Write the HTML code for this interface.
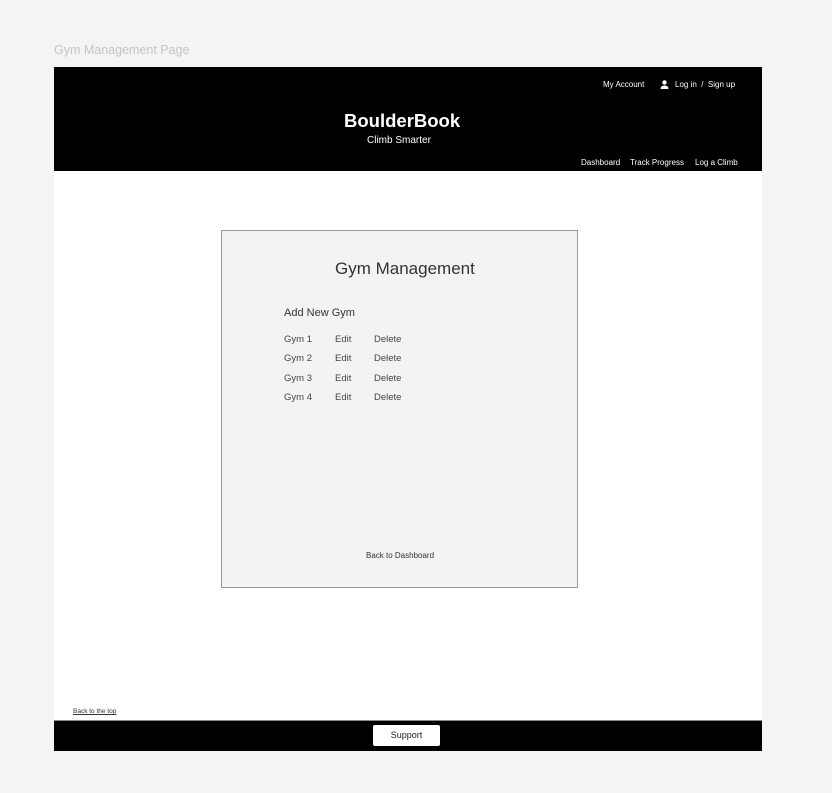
<!DOCTYPE html>
<html><head><style>
*{margin:0;padding:0;box-sizing:border-box}
body{width:832px;height:793px;background:#f4f4f4;font-family:"Liberation Sans",sans-serif;position:relative;overflow:hidden}
.a{position:absolute;white-space:nowrap}
</style></head><body>
<div class="a" style="left:54px;top:43px;font-size:12.5px;color:#c4c4c4">Gym Management Page</div>
<div class="a" style="left:54px;top:67px;width:708px;height:684px;background:#fff"></div>
<div class="a" style="left:54px;top:67px;width:708px;height:104px;background:#000"></div>
<div class="a" style="left:603px;top:80px;font-size:8px;color:#fff">My Account</div>
<svg class="a" style="left:660px;top:80px" width="9" height="9" viewBox="0 0 9 9"><circle cx="4.5" cy="2.5" r="2.2" fill="#fff"/><path d="M0.5 9 Q0.5 5.5 4.5 5.5 Q8.5 5.5 8.5 9Z" fill="#fff"/></svg>
<div class="a" style="left:675px;top:80px;font-size:8px;color:#fff">Log in &nbsp;/&nbsp; Sign up</div>
<div class="a" style="left:344px;top:110px;font-size:18.5px;font-weight:bold;color:#fff">BoulderBook</div>
<div class="a" style="left:367px;top:135px;font-size:10px;color:#fff">Climb Smarter</div>
<div class="a" style="left:581px;top:158px;font-size:8px;color:#fff">Dashboard</div>
<div class="a" style="left:630px;top:158px;font-size:8px;color:#fff">Track Progress</div>
<div class="a" style="left:695px;top:158px;font-size:8px;color:#fff">Log a Climb</div>
<div class="a" style="left:221px;top:230px;width:357px;height:358px;background:#f2f3f5;border:1px solid #999"></div>
<div class="a" style="left:335px;top:259px;font-size:17px;color:#333">Gym Management</div>
<div class="a" style="left:284px;top:307px;font-size:11px;color:#333">Add New Gym</div>
<div class="a" style="left:284px;top:330px;font-size:9.5px;color:#444;line-height:19.3px">Gym 1<br>Gym 2<br>Gym 3<br>Gym 4</div>
<div class="a" style="left:335px;top:330px;font-size:9.5px;color:#444;line-height:19.3px">Edit<br>Edit<br>Edit<br>Edit</div>
<div class="a" style="left:374px;top:330px;font-size:9.5px;color:#444;line-height:19.3px">Delete<br>Delete<br>Delete<br>Delete</div>
<div class="a" style="left:366px;top:551px;font-size:8px;color:#333">Back to Dashboard</div>
<div class="a" style="left:73px;top:708px;font-size:6.5px;color:#333;text-decoration:underline">Back to the top</div>
<div class="a" style="left:54px;top:720px;width:708px;height:31px;background:#000;border-top:1px solid #888"></div>
<div class="a" style="left:373px;top:725px;width:67px;height:21px;background:#fff;border-radius:2px;font-size:9px;color:#222;text-align:center;line-height:21px">Support</div>
</body></html>
